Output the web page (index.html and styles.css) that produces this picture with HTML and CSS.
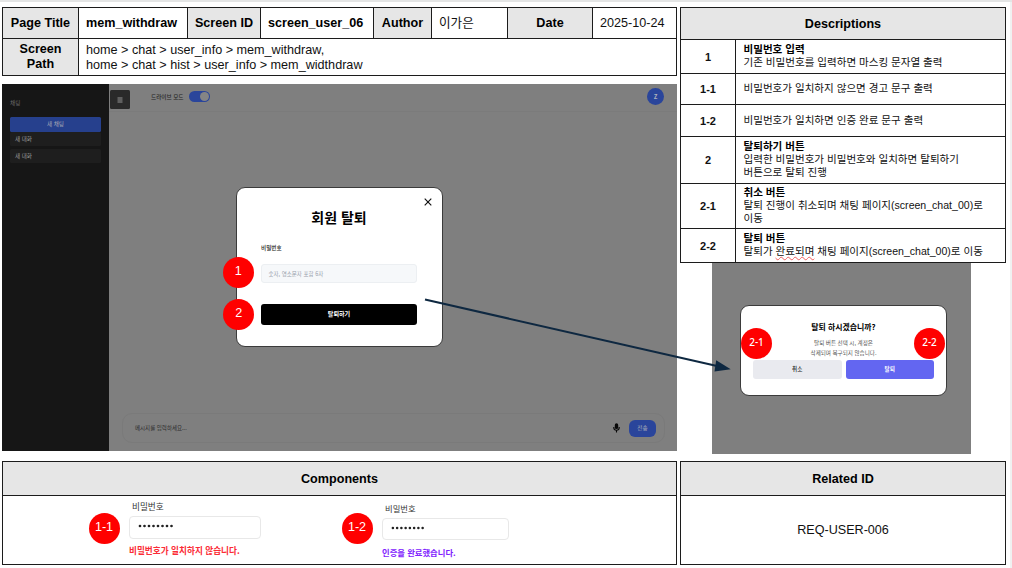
FILE: index.html
```html
<!DOCTYPE html>
<html lang="ko">
<head>
<meta charset="utf-8">
<title>mem_withdraw</title>
<link rel="stylesheet" href="styles.css">
</head>
<body>
<div class="slide">
  <div class="left">
    <div class="meta">
      <div class="head">Page Title</div><div class="value strong">mem_withdraw</div>
      <div class="head">Screen ID</div><div class="value strong">screen_user_06</div>
      <div class="head">Author</div><div class="value kr">이가은</div>
      <div class="head">Date</div><div class="value">2025-10-24</div>
      <div class="head">Screen<br>Path</div>
      <div class="value path">home &gt; chat &gt; user_info &gt; mem_withdraw,<br>home &gt; chat &gt; hist &gt; user_info &gt; mem_widthdraw</div>
    </div>

    <div class="app">
      <aside class="sidebar">
        <div class="side-title">채팅</div>
        <div class="new-chat">새 채팅</div>
        <div class="chat-item">새 대화</div>
        <div class="chat-item">새 대화</div>
      </aside>
      <div class="main">
        <div class="topbar">
          <div class="menu"><svg width="6" height="6" viewBox="0 0 6 6"><path d="M.5 1h5M.5 3h5M.5 5h5" stroke="#a0a0a0" stroke-width=".9"/></svg></div>
          <span class="mode">드라이브 모드</span>
          <div class="toggle"><i></i></div>
          <div class="avatar">Z</div>
        </div>
        <div class="composer">
          <span class="hint">메시지를 입력하세요...</span>
          <svg class="mic" width="7" height="10" viewBox="0 0 7 10"><rect x="1.8" y=".3" width="3.4" height="5.8" rx="1.7" fill="#080808"/><path d="M.8 4v.8a2.7 2.5 0 0 0 5.4 0V4M3.5 7.2v2.3" fill="none" stroke="#080808" stroke-width="1.1"/></svg>
          <div class="send">전송</div>
        </div>
      </div>
      <div class="modal">
        <svg class="close" width="8" height="8" viewBox="0 0 8 8"><path d="M.7.7l6.6 6.6M7.3.7L.7 7.3" stroke="#111" stroke-width="1.15"/></svg>
        <h1>회원 탈퇴</h1>
        <label>비밀번호</label>
        <div class="field">숫자, 영소문자 포함 6자</div>
        <div class="submit">탈퇴하기</div>
        <b class="badge b1">1</b>
        <b class="badge b2">2</b>
      </div>
    </div>

    <div class="panel components">
      <div class="head">Components</div>
      <div class="samples">
        <div class="sample first">
          <b class="badge">1-1</b>
          <div class="form">
            <div class="label">비밀번호</div>
            <div class="password"><svg width="36" height="4" viewBox="0 0 36 4"><path d="M2 2h33" stroke="#222" stroke-width="2.7" stroke-linecap="round" stroke-dasharray="0 4.5"/></svg></div>
            <div class="note error">비밀번호가 일치하지 않습니다.</div>
          </div>
        </div>
        <div class="sample second">
          <b class="badge">1-2</b>
          <div class="form">
            <div class="label">비밀번호</div>
            <div class="password"><svg width="34" height="4" viewBox="0 0 36 4"><path d="M2 2h33" stroke="#222" stroke-width="2.7" stroke-linecap="round" stroke-dasharray="0 4.5"/></svg></div>
            <div class="note ok">인증을 완료했습니다.</div>
          </div>
        </div>
      </div>
    </div>
  </div>

  <div class="right">
    <div class="descriptions">
      <div class="head wide">Descriptions</div>
      <div class="num">1</div><div class="desc"><b>비밀번호 입력</b>기존 비밀번호를 입력하면 마스킹 문자열 출력</div>
      <div class="num">1-1</div><div class="desc">비밀번호가 일치하지 않으면 경고 문구 출력</div>
      <div class="num">1-2</div><div class="desc">비밀번호가 일치하면 인증 완료 문구 출력</div>
      <div class="num">2</div><div class="desc"><b>탈퇴하기 버튼</b>입력한 비밀번호가 비밀번호와 일치하면 탈퇴하기<br>버튼으로 탈퇴 진행</div>
      <div class="num">2-1</div><div class="desc"><b>취소 버튼</b>탈퇴 진행이 취소되며 채팅 페이지(screen_chat_00)로<br>이동</div>
      <div class="num">2-2</div><div class="desc last"><b>탈퇴 버튼</b><span>탈퇴가 <u>완료되며</u> 채팅 페이지(screen_chat_00)로 이동</span></div>
    </div>
    <div class="confirm-stage">
      <div class="confirm">
        <h2>탈퇴 하시겠습니까?</h2>
        <p>탈퇴 버튼 선택 시, 계정은<br>삭제되며 복구되지 않습니다.</p>
        <div class="actions"><div class="cancel">취소</div><div class="leave">탈퇴</div></div>
        <b class="badge small b21">2-1</b>
        <b class="badge small b22">2-2</b>
      </div>
    </div>
    <div class="panel related">
      <div class="head">Related ID</div>
      <div class="req">REQ-USER-006</div>
    </div>
  </div>

  <svg class="arrow" width="312" height="80" viewBox="0 0 312 80"><path d="M5 4.5L297 71" stroke="#0e2841" stroke-width="2"/><path d="M296.2 65.3L310.7 74.3L294.5 76.4z" fill="#0e2841"/></svg>
</div>
</body>
</html>
```
FILE: styles.css
```css
* { box-sizing: border-box; }
body { margin: 0; background: #fff; }
.slide {
  position: relative;
  width: 1012px;
  height: 568px;
  padding: 5px 0 0 2px;
  display: flex;
  gap: 3px;
  overflow: hidden;
  border-top: 2px solid #e4e5e5;
  font-family: "Liberation Sans", "Noto Sans CJK KR", sans-serif;
  font-size: 12.6px;
  color: #111;
  white-space: nowrap;
}
.slide::after {
  content: "";
  position: absolute;
  inset: 0 0 0 auto;
  width: 2px;
  background: #f0f1f1;
}
.left { width: 675px; }
.right { width: 326px; }
.head {
  background: #e6e6e6;
  font-weight: bold;
  color: #000;
  display: flex;
  align-items: center;
  justify-content: center;
  text-align: center;
}
.meta, .descriptions {
  display: grid;
  gap: 1px;
  padding: 1px;
  background: #1c1c1c;
}
.meta {
  height: 69px;
  grid-template-columns: 75px 108px 72px 112px 57px 75px 84px 83px;
  grid-template-rows: 30px 36px;
  line-height: 15px;
}
.value { background: #fff; padding-left: 7px; display: flex; align-items: center; }
.strong { font-weight: bold; color: #000; }
.path { grid-column: 2 / 9; font-size: 12.64px; padding-top: 1px; }

/* chat app */
.app {
  position: relative;
  margin-top: 8px;
  height: 367px;
  display: flex;
  background: #7f7f7f;
  font-family: "Noto Sans CJK KR", sans-serif;
  font-size: 5.6px;
  line-height: 8px;
}
.sidebar { width: 107px; background: #161616; padding: 14px 8px 0; color: #9a9a9a; }
.side-title { color: #6a6a6a; height: 19px; line-height: 10px; }
.new-chat {
  height: 15px;
  line-height: 15px;
  border-radius: 1.5px;
  background: #26408d;
  color: #a5a9b5;
  text-align: center;
}
.chat-item { height: 14px; line-height: 14px; margin-bottom: 3px; padding-left: 5px; background: #1e1e1e; border-radius: 1.5px; }
.main { flex: 1; display: flex; flex-direction: column; justify-content: space-between; padding-bottom: 8px; }
.topbar { height: 28px; border-bottom: 1px solid #7b7b7b; display: flex; align-items: center; padding: 0 13px 2px 1px; }
.menu { width: 20px; height: 19px; background: #2a2a2a; border-radius: 1.5px; display: flex; align-items: center; justify-content: center; margin-top: 6px; }
.mode { margin-left: 21px; color: #262626; width: 38px; font-weight: 500; }
.toggle { width: 21px; height: 11px; border-radius: 6px; background: #2a459b; padding: 1px; display: flex; justify-content: flex-end; }
.toggle i { width: 9px; height: 9px; border-radius: 50%; background: #858585; }
.avatar { margin-left: auto; width: 17px; height: 17px; border-radius: 50%; background: #2a459b; color: #b0b3bd; font-weight: bold; font-size: 6px; line-height: 17px; text-align: center; }
.composer { margin: 0 12px 0 13px; height: 30px; border: 1px solid #7a7a7a; border-radius: 10px; display: flex; align-items: center; padding: 0 8px 0 12px; }
.hint { color: #2c2c2c; flex: 1; font-size: 5.5px; }
.mic { margin-right: 9px; }
.send { width: 27px; height: 17px; border-radius: 6px; background: #2a459b; color: #aaaeb9; line-height: 17px; text-align: center; }

.modal {
  position: absolute;
  left: 234px;
  top: 103px;
  width: 207px;
  height: 160px;
  border: 1px solid #3b3b3b;
  border-radius: 9px;
  background: #fff;
  padding: 19px 25px 0 24px;
}
.close { position: absolute; right: 10.5px; top: 9.5px; }
.modal h1 { margin: 0; font-size: 14px; line-height: 20px; text-align: center; color: #000; }
.modal label { display: block; margin-top: 17px; font-weight: 500; color: #222; }
.field { margin-top: 11.5px; height: 19.5px; line-height: 19px; border: .5px solid #eceff2; border-radius: 3px; background: #f6f8fa; color: #98a0ab; padding-left: 6.5px; font-size: 5.5px; }
.submit { margin-top: 20.5px; height: 21.5px; line-height: 20px; border-radius: 3px; background: #000; color: #fff; font-size: 6.1px; font-weight: bold; text-align: center; }

.badge {
  display: block;
  flex: none;
  width: 31px;
  height: 31px;
  border-radius: 50%;
  background: #f00;
  color: #fff;
  font: 12.6px/29px "Liberation Sans", sans-serif;
  text-align: center;
}
.b1 { position: absolute; left: -14.3px; top: 69.4px; }
.b2 { position: absolute; left: -13.7px; top: 111.4px; }
.small { font: 500 10px/29px "Noto Sans", sans-serif; }

/* bottom panels */
.panel { border: 1px solid #1c1c1c; height: 104px; }
.panel .head { height: 34px; border-bottom: 1px solid #1c1c1c; }
.components { margin-top: 10px; }
.samples { display: flex; padding-left: 85.5px; font-family: "Noto Sans CJK KR", sans-serif; font-size: 8.65px; line-height: 12px; }
.sample { display: flex; gap: 9.5px; }
.sample > .badge { margin-top: 16.5px; }
.first { width: 253px; }
.form { padding-top: 4px; }
.label { padding-left: 3px; color: #333; }
.password { margin-top: 4px; width: 132px; height: 23px; border: 1px solid #e8e8e8; border-radius: 4px; padding: 0 0 3px 8px; display: flex; align-items: center; }
.note { margin-top: 5px; font-weight: bold; }
.error { color: #fb2c36; }
.ok { color: #7f22fe; }
.second .form { padding-top: 6px; font-size: 8.3px; }
.second .password { width: 127px; height: 22px; margin-top: 4px; padding-bottom: 2px; }
.second .note { margin-top: 6px; }

/* description table */
.descriptions { height: 256px; grid-template-columns: 54px 269px; grid-template-rows: 31px 33px 30px 31px 46px 44px 33px; }
.wide { grid-column: 1 / 3; }
.num, .desc { background: #fff; display: flex; }
.num { align-items: center; justify-content: center; font-weight: bold; font-size: 11px; }
.desc { display: block; align-content: center; padding-left: 7.5px; padding-bottom: 1px; font-size: 10.55px; line-height: 13px; }
.desc b { display: block; color: #000; }
.desc u { text-decoration: underline wavy #f06060 .5px; text-underline-offset: 1px; }

.confirm-stage { margin: 0 35px 0 32px; height: 191px; background: #7f7f7f; padding: 42px 24px 0 28px; font-family: "Noto Sans CJK KR", sans-serif; }
.confirm { position: relative; height: 91px; border: 1px solid #3b3b3b; border-radius: 9px; background: #fff; padding: 15px 12px 0; text-align: center; }
.confirm h2 { margin: 0; font-size: 7.9px; line-height: 12px; color: #000; }
.confirm p { margin: 6px 0 0; font-size: 5.55px; line-height: 9.5px; color: #555; }
.actions { display: flex; gap: 4px; margin-top: 1.5px; font-size: 5.6px; line-height: 18px; }
.actions div { flex: 1; height: 19px; border-radius: 3px; }
.cancel { background: #e9eaef; color: #222; font-weight: 500; }
.leave { background: #6366f1; color: #fff; font-weight: bold; }
.b21 { position: absolute; left: 0; top: 22px; }
.b22 { position: absolute; right: 1px; top: 22px; }
.related { margin-top: 7px; }
.req { height: 68px; display: flex; align-items: center; justify-content: center; }

.arrow { position: absolute; left: 420px; top: 293px; }
```
